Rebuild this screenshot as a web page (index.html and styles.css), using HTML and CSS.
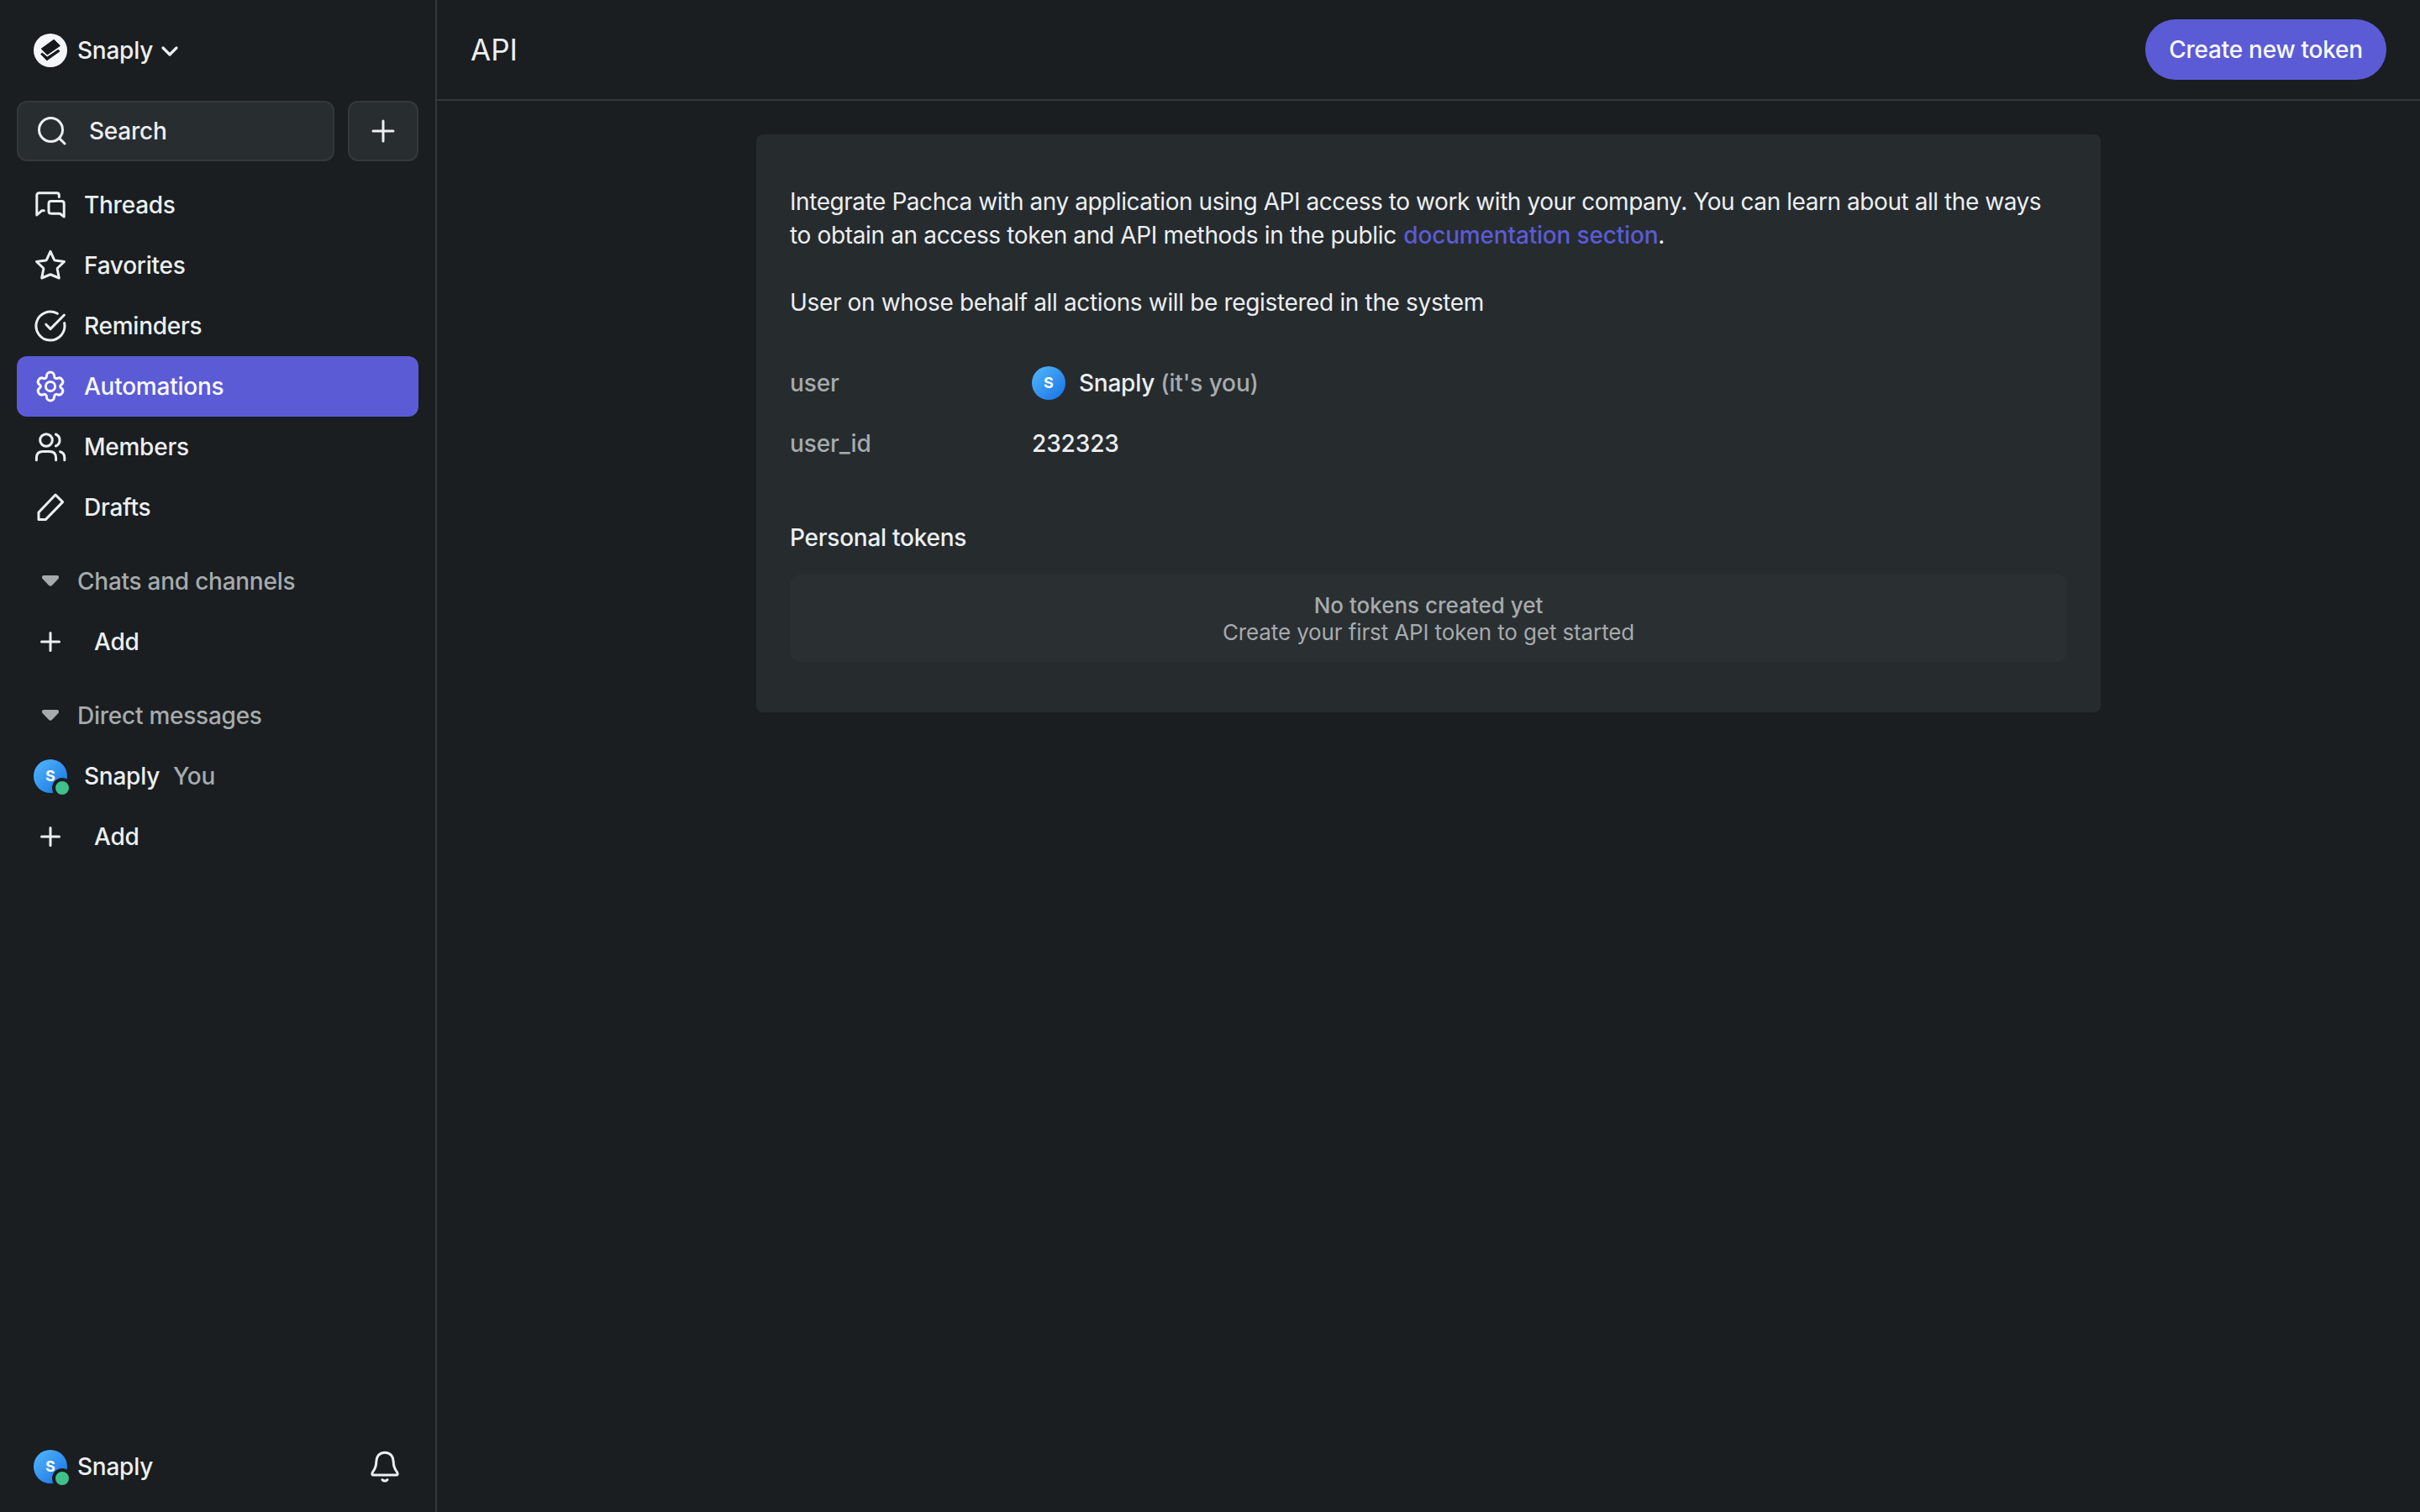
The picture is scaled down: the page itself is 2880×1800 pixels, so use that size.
FILE: index.html
```html
<!DOCTYPE html>
<html lang="en">
<head>
    <meta charset="UTF-8">
    <meta name="viewport" content="width=device-width, initial-scale=1.0">
    <title>API</title>
    <link rel="stylesheet" href="styles.css">
</head>
<body>
    <aside class="sidebar">
        <div class="workspace">
            <svg class="workspace-logo" viewBox="0 0 40 40">
                <circle cx="20" cy="20" r="20" fill="#f5f7fb"/>
                <path d="M9.2 18 L24.2 7.2 L31.4 14.5 L16.3 25 Z" fill="#17191b" stroke="#17191b" stroke-linejoin="round"/>
                <path d="M8.6 24.4 L10.4 23.2 L16.2 28 L29.4 19.2 L30.8 21.2 L15.8 31.8 Z" fill="#17191b" stroke="#17191b" stroke-linejoin="round"/>
            </svg>
            <span class="workspace-name">Snaply</span>
            <svg class="chevron" viewBox="0 0 24 24"><path d="M4 9 L12 17 L20 9"/></svg>
        </div>

        <div class="search-row">
            <div class="search">
                <svg class="icon" viewBox="0 0 40 40"><circle cx="18.5" cy="18.5" r="14"/><path d="M28.5 28.5 L35 35"/></svg>
                <span>Search</span>
            </div>
            <button class="add-button">
                <svg class="icon" viewBox="0 0 40 40"><path d="M20 8 V32 M8 20 H32"/></svg>
            </button>
        </div>

        <nav class="nav">
            <a class="nav-item">
                <svg class="icon" viewBox="0 0 40 40"><path d="M30.3 10.5 V8.5 Q30.3 5.8 27.6 5.8 H6.6 Q3.8 5.8 3.8 8.5 V32 L9.6 26.8 H12.4"/><path d="M20.8 15.6 H33.4 Q36.2 15.6 36.2 18.4 V34 L31.2 30.2 H20.8 Q18 30.2 18 27.4 V18.4 Q18 15.6 20.8 15.6 Z"/></svg>
                <span>Threads</span>
            </a>
            <a class="nav-item">
                <svg class="icon" viewBox="0 0 40 40"><path d="M20 3.4 L24.6 13.4 Q24.9 14 25.6 14.1 L36.5 15.5 L28.6 23 Q28.1 23.5 28.2 24.2 L30.3 35 L20.7 31 Q20 30.7 19.3 31 L9.7 35 L11.8 24.2 Q11.9 23.5 11.4 23 L3.5 15.5 L14.4 14.1 Q15.1 14 15.4 13.4 Z"/></svg>
                <span>Favorites</span>
            </a>
            <a class="nav-item">
                <svg class="icon" viewBox="0 0 40 40"><path d="M28.3 5.2 A17 17 0 1 0 36.6 16.6"/><path d="M14.8 18.2 L20 23.6 L36.4 7"/></svg>
                <span>Reminders</span>
            </a>
            <a class="nav-item active">
                <svg class="icon" viewBox="0 0 40 40"><circle cx="20" cy="20" r="5.6"/><path d="M24.5 7.4 A4.5 4.5 0 0 0 15.5 7.4 C15.5 9.8 13.4 11.4 11.3 10.2 A4.5 4.5 0 0 0 6.8 17.8 C8.9 19 8.9 21 6.8 22.2 A4.5 4.5 0 0 0 11.3 29.8 C13.4 28.6 15.5 30.2 15.5 32.6 A4.5 4.5 0 0 0 24.5 32.6 C24.5 30.2 26.6 28.6 28.7 29.8 A4.5 4.5 0 0 0 33.2 22.2 C31.1 21 31.1 19 33.2 17.8 A4.5 4.5 0 0 0 28.7 10.2 C26.6 11.4 24.5 9.8 24.5 7.4 Z"/></svg>
                <span>Automations</span>
            </a>
            <a class="nav-item">
                <svg class="icon" viewBox="0 0 40 40"><circle cx="15" cy="12" r="7.3"/><path d="M26.4 5 A7.6 7.6 0 0 1 26.4 19"/><path d="M3.4 35.8 V33 Q3.4 25.4 11 25.4 H19 Q26.6 25.4 26.6 33 V35.8"/><path d="M31.6 25.8 Q36.8 27.4 36.8 33 V35.8"/></svg>
                <span>Members</span>
            </a>
            <a class="nav-item">
                <svg class="icon" viewBox="0 0 40 40"><path d="M26 5 L34.6 13.6 L14.2 34.6 H6 V26 Z"/></svg>
                <span>Drafts</span>
            </a>
        </nav>

        <div class="section">
            <div class="section-title">
                <svg class="caret" viewBox="0 0 40 40"><path d="M12 15 H28 V15.6 L20.6 23.4 Q20 24 19.4 23.4 L12 15.6 Z"/></svg>
                <span>Chats and channels</span>
            </div>
            <a class="section-add">
                <svg class="icon" viewBox="0 0 40 40"><path d="M20 9.5 V30.5 M9.5 20 H30.5"/></svg>
                <span>Add</span>
            </a>
        </div>

        <div class="section">
            <div class="section-title">
                <svg class="caret" viewBox="0 0 40 40"><path d="M12 15 H28 V15.6 L20.6 23.4 Q20 24 19.4 23.4 L12 15.6 Z"/></svg>
                <span>Direct messages</span>
            </div>
            <a class="nav-item">
                <span class="avatar">S<i class="status"></i></span>
                <span>Snaply</span>
                <span class="you">You</span>
            </a>
            <a class="section-add">
                <svg class="icon" viewBox="0 0 40 40"><path d="M20 9.5 V30.5 M9.5 20 H30.5"/></svg>
                <span>Add</span>
            </a>
        </div>

        <div class="profile">
            <span class="avatar">S<i class="status"></i></span>
            <span class="profile-name">Snaply</span>
            <svg class="icon bell" viewBox="0 0 40 40"><path d="M20 3.2 C13 3.2 9.8 8.4 9.8 14 C9.8 20 8.6 22.6 5.4 26.6 Q3.8 30 6.6 30 H33.4 Q36.2 30 34.6 26.6 C31.4 22.6 30.2 20 30.2 14 C30.2 8.4 27 3.2 20 3.2 Z"/><path d="M17 35.6 Q20 38.6 23 35.6"/></svg>
        </div>
    </aside>

    <main class="main">
        <header class="header">
            <h1>API</h1>
            <button class="create-button">Create new token</button>
        </header>

        <div class="card">
            <p><span class="lead">Integrate Pachca with any application using API access to work with your company. You can learn about all the ways</span><br>to obtain an access token and API methods in the public <a class="link">documentation section</a>.</p>
            <p>User on whose behalf all actions will be registered in the system</p>

            <div class="fields">
                <div class="field">
                    <span class="field-label">user</span>
                    <span class="avatar">S</span>
                    <span class="field-name">Snaply <span class="muted">(it's you)</span></span>
                </div>
                <div class="field">
                    <span class="field-label">user_id</span>
                    <span class="field-value">232323</span>
                </div>
            </div>

            <h2>Personal tokens</h2>
            <div class="empty">
                <div class="empty-title">No tokens created yet</div>
                <div class="empty-text">Create your first API token to get started</div>
            </div>
        </div>
    </main>
</body>
</html>
```
FILE: styles.css
```css
* {
    box-sizing: border-box;
}

body {
    margin: 0;
    height: 100vh;
    display: flex;
    background-color: #1a1e20;
    color: #eceff2;
    font-family: Inter, "Liberation Sans", sans-serif;
    font-size: 28px;
    font-weight: 500;
    line-height: 40px;
    letter-spacing: -0.25px;
}

h1, h2, p {
    margin: 0;
    font-weight: 500;
}

button {
    font: inherit;
    letter-spacing: inherit;
    border: none;
}

.sidebar {
    width: 520px;
    display: flex;
    flex-direction: column;
    border-right: 2px solid #34383b;
    padding: 0 20px;
}

.workspace {
    height: 120px;
    display: flex;
    align-items: center;
    padding-left: 20px;
}

.workspace-logo {
    width: 40px;
    height: 40px;
    margin-right: 12px;
}

.chevron {
    width: 24px;
    height: 24px;
    margin-left: 8px;
    fill: none;
    stroke: #eceff2;
    stroke-width: 3.2;
    stroke-linecap: round;
    stroke-linejoin: round;
}

.icon {
    width: 40px;
    height: 40px;
    flex-shrink: 0;
    fill: none;
    stroke: currentColor;
    stroke-width: 3;
    stroke-linecap: round;
    stroke-linejoin: round;
}

.search-row {
    display: flex;
    gap: 16px;
    margin-bottom: 16px;
}

.search {
    width: 378px;
    height: 72px;
    display: flex;
    align-items: center;
    gap: 24px;
    padding-left: 20px;
    background-color: #282d30;
    border: 2px solid #34383b;
    border-radius: 12px;
}

.add-button {
    width: 84px;
    height: 72px;
    display: flex;
    align-items: center;
    justify-content: center;
    padding: 0;
    color: inherit;
    background-color: #282d30;
    border: 2px solid #34383b;
    border-radius: 12px;
}

.nav-item,
.section-title,
.section-add,
.profile {
    height: 72px;
    display: flex;
    align-items: center;
    gap: 20px;
    padding: 0 20px;
    border-radius: 12px;
}

.nav-item.active {
    background-color: #5b5bd6;
    color: #f8f9ff;
}

.section {
    margin-top: 16px;
}

.section-title {
    gap: 12px;
    color: #a6abad;
}

.section-add {
    gap: 32px;
}

.caret {
    width: 40px;
    height: 40px;
    fill: #a6abad;
    stroke: #a6abad;
    stroke-width: 4;
    stroke-linejoin: round;
}

.avatar {
    position: relative;
    width: 40px;
    height: 40px;
    flex-shrink: 0;
    border-radius: 50%;
    background: linear-gradient(135deg, #54b9fb, #1670e5);
    color: #ffffff;
    font-size: 18px;
    font-weight: 700;
    letter-spacing: 0;
    text-align: center;
}

/* online dot, sits over the corner of the avatar */
.status {
    position: absolute;
    right: -6px;
    bottom: -6px;
    width: 24px;
    height: 24px;
    border: 4px solid #1a1e20;
    border-radius: 50%;
    background-color: #3fc08d;
}

.you,
.muted,
.field-label {
    color: #a6abad;
}

.you {
    margin-left: -4px;
}

.profile {
    margin-top: auto;
    margin-bottom: 18px;
    gap: 12px;
}

.bell {
    margin-left: auto;
}

.main {
    flex: 1;
}

.header {
    height: 120px;
    display: flex;
    align-items: center;
    justify-content: space-between;
    padding: 0 40px;
    border-bottom: 2px solid #34383b;
}

.header h1 {
    font-size: 35px;
    font-weight: 400;
    letter-spacing: 0;
}

.create-button {
    width: 287px;
    height: 72px;
    padding: 0;
    border-radius: 36px;
    background-color: #5b5bd6;
    color: #f8f9ff;
}

.card {
    width: 1600px;
    height: 688px;
    margin: 40px auto 0;
    padding: 60px 40px;
    background-color: #262b2e;
    border-radius: 8px;
}

.card p {
    margin-bottom: 40px;
    font-weight: 400;
    letter-spacing: -0.35px;
    white-space: nowrap;
}

.card .lead {
    letter-spacing: -0.44px;
}

.card .link {
    margin-left: 1px;
    color: #5b5bd6;
    font-weight: 500;
    letter-spacing: -0.18px;
}

.fields {
    margin-top: 40px;
}

.field {
    height: 72px;
    display: flex;
    align-items: center;
}

.field-label {
    width: 288px;
    letter-spacing: -0.1px;
}

.field-name {
    margin-left: 16px;
}

.field-name .muted,
.field-value {
    letter-spacing: -0.12px;
}

.card h2 {
    margin-top: 56px;
    margin-bottom: 24px;
    font-size: 28px;
}

.empty {
    height: 104px;
    padding: 21px 20px 19px;
    background-color: #2a2f32;
    border-radius: 12px;
    color: #a6abad;
    font-size: 26px;
    line-height: 32px;
    text-align: center;
}

.empty-title {
    letter-spacing: 0;
}

.empty-text {
    font-weight: 400;
    letter-spacing: -0.12px;
}
```
